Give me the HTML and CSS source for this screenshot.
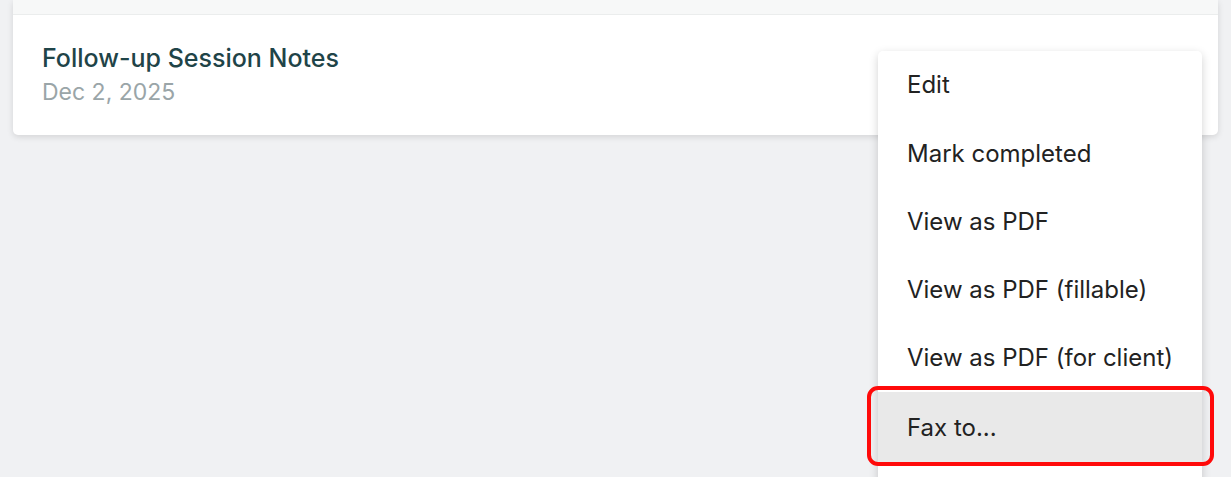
FILE: index.html
```html
<!DOCTYPE html>
<html>
<head>
<meta charset="utf-8">
<link rel="stylesheet" href="styles.css">
</head>
<body>
<div class="page">
  <div class="card">
    <div class="card-head"></div>
    <div class="card-body">
      <div class="title">Follow-up Session Notes</div>
      <div class="date">Dec 2, 2025</div>
    </div>
  </div>
</div>
<div class="menu">
  <div class="item first">Edit</div>
  <div class="item">Mark completed</div>
  <div class="item">View as PDF</div>
  <div class="item">View as PDF (fillable)</div>
  <div class="item">View as PDF (for client)</div>
  <div class="item active">Fax to...</div>
</div>
<div class="highlight"></div>
</body>
</html>
```
FILE: styles.css
```css
html, body {
  margin: 0;
  padding: 0;
  height: 100%;
  overflow: hidden;
}
body {
  background: #f0f1f3;
  font-family: Inter, "Noto Sans", sans-serif;
}
.page {
  padding: 0 13px;
}
.card {
  background: #fff;
  border-radius: 0 0 5px 5px;
  box-shadow: 0 2px 6px rgba(0, 0, 0, 0.12);
}
.card-head {
  height: 14px;
  background: #f7f8f8;
  border-bottom: 1px solid #ebeded;
}
.card-body {
  height: 120px;
  padding: 28px 29px 0;
  box-sizing: border-box;
}
.title {
  font-size: 25px;
  font-weight: 500;
  color: #1f4448;
  line-height: 30px;
}
.date {
  font-size: 23px;
  color: #9aa5a8;
  line-height: 32px;
  margin-top: 3px;
}
.menu {
  position: absolute;
  left: 878px;
  top: 51px;
  width: 324px;
  background: #fff;
  border-radius: 5px;
  box-shadow: 0 3px 10px rgba(0, 0, 0, 0.18);
  padding-bottom: 30px;
}
.item {
  height: 68px;
  display: flex;
  align-items: center;
  padding-left: 29px;
  font-size: 24px;
  color: #222;
}
.item.first {
  height: 66px;
  padding-bottom: 2px;
  box-sizing: border-box;
  height: 68px;
}
.item.active {
  background: #e9e9e9;
  height: 71px;
  margin-top: 1px;
}
.highlight {
  position: absolute;
  left: 867px;
  top: 386px;
  width: 339px;
  height: 72px;
  border: 4px solid #ff0a0a;
  border-radius: 11px;
}
```
